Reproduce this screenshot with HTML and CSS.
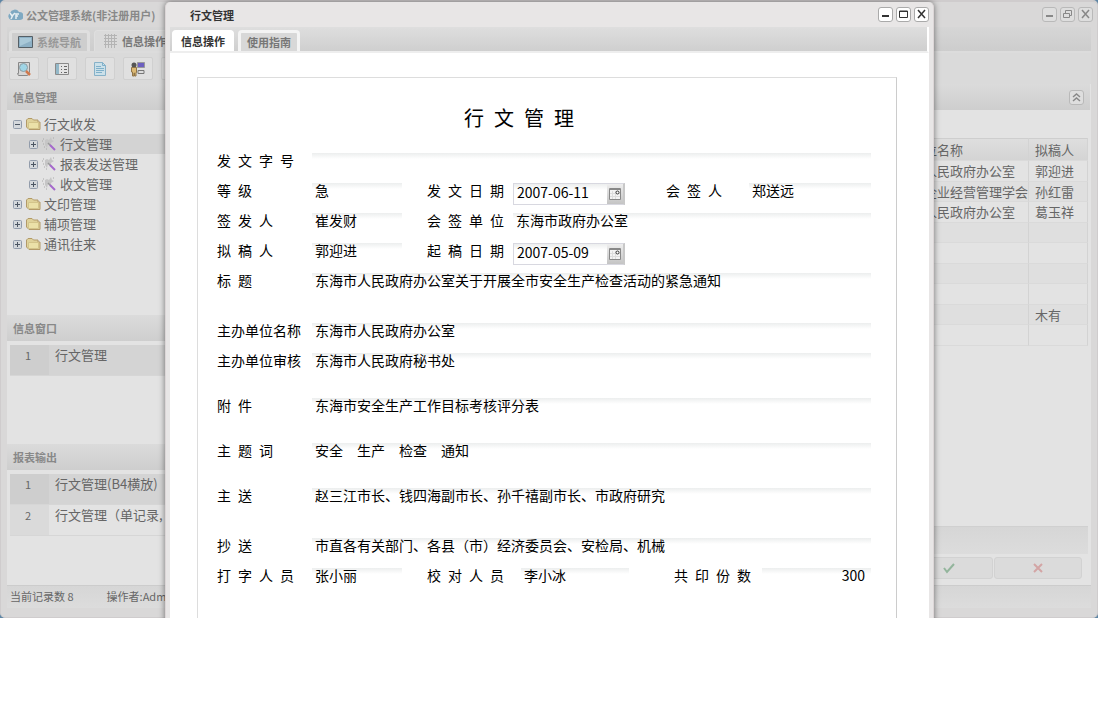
FILE: index.html
```html
<!DOCTYPE html>
<html lang="zh-CN">
<head>
	<meta charset="UTF-8">
	<meta name="viewport" content="width=device-width, initial-scale=1.0">
	<title>公文管理系统</title>
	<link rel="stylesheet" href="styles.css">
</head>
<body>
	<svg class="symbols" aria-hidden="true">
		<symbol id="folder" viewBox="0 0 16 14">
			<path d="M1.500 10V3L3 1.500h4l1.500 1.500H13v2h2v7.500H4z" fill="#dfd29a" stroke="#b39a68"/>
			<path d="M3.500 5.500h10v6h-10z" fill="#ebe1a8" stroke="#d3c48a"/>
		</symbol>
		<symbol id="plus" viewBox="0 0 9 9">
			<rect x=".5" y=".5" width="8" height="8" rx="1" fill="#d4d8dc" stroke="#929cab"/>
			<path d="M2 4.500h5M4.500 2v5" stroke="#4c5663"/>
		</symbol>
		<symbol id="minus" viewBox="0 0 9 9">
			<rect x=".5" y=".5" width="8" height="8" rx="1" fill="#d4d8dc" stroke="#929cab"/>
			<path d="M2 4.500h5" stroke="#4c5663"/>
		</symbol>
		<symbol id="wand" viewBox="0 0 16 16">
			<path d="M4 4l2-1 2 1 2-3 1 3 2 1-3 2v3L7 8l-1 4-2-3z" fill="#c6c6c6"/>
			<path d="M1 5h1M2 8h1M3 11h1M5 13h1M2 3h1M12 2h1" stroke="#a8a8a8"/>
			<path d="M7 7l3 3" stroke="#999" stroke-width="1.500"/>
			<path d="M9 9l5 5" stroke="#a568cc" stroke-width="2"/>
		</symbol>
		<symbol id="min" viewBox="0 0 15 15"><path d="M4 9h7" stroke="currentColor" stroke-width="2"/></symbol>
		<symbol id="max" viewBox="0 0 15 15"><path d="M3.500 4v6.500h8V4zM3 4.500h9" fill="none" stroke="currentColor"/></symbol>
		<symbol id="restore" viewBox="0 0 15 15"><path d="M5.500 6V3.500h6v5H9M3.500 6.500h6v4h-6z" fill="none" stroke="currentColor"/></symbol>
		<symbol id="close" viewBox="0 0 15 15"><path d="M4 3l7 8M11 3l-7 8" stroke="currentColor" stroke-width="1.500"/></symbol>
		<symbol id="calendar" viewBox="0 0 14 14">
			<path d="M1.500 1.500h11v11h-11z" fill="#f4f4f4" stroke="#888"/>
			<path d="M1 2.500h12" stroke="#888"/>
			<path d="M4.500 4v8M7.500 4v8M2 6.500h10M2 9.500h10" stroke="#ddd"/>
			<circle cx="9.500" cy="5.500" r="1.500" fill="#fff" stroke="#333"/>
		</symbol>
	</svg>

	<div class="desktop">
		<div class="app">
			<header class="titlebar">
				<svg class="logo" viewBox="0 0 16 13">
					<path d="M4 12a4 4 0 0 1-1-7 5 5 0 0 1 9-1 4 4 0 0 1 1 8z" fill="#7fa9c2"/>
					<path d="M3 5l2 3 3-3M6 7l-2 4M12 6H9v2h2M9 8v3" fill="none" stroke="#e6eef2" stroke-width="1.500"/>
				</svg>
				<span class="caption">公文管理系统(非注册用户)</span>
				<div class="window-buttons">
					<button aria-label="最小化"><svg><use href="#min"/></svg></button>
					<button aria-label="还原"><svg><use href="#restore"/></svg></button>
					<button aria-label="关闭"><svg><use href="#close"/></svg></button>
				</div>
			</header>

			<nav class="tabs">
				<button class="tab inactive">
					<svg viewBox="0 0 16 14"><path d="M.5 1.500h14v11H.5z" fill="#8db0c5" stroke="#555f66"/><path d="M2 3h11v3L2 11z" fill="#a9c8d8"/></svg>系统导航
				</button>
				<button class="tab">
					<svg viewBox="0 0 16 14"><path d="M2.500 0v14M5.500 0v14M8.500 0v14M11.500 0v14M1 1.500h13M1 4.500h13M1 7.500h13M1 10.500h13" stroke="#b4b4b4"/></svg>信息操作
				</button>
			</nav>

			<div class="toolbar">
				<button aria-label="查询"><svg viewBox="0 0 16 16"><path d="M2.500 1.500h11v10l-2 3h-9l-1-2h1z" fill="#d6d6d6" stroke="#888"/><circle cx="7.500" cy="6.500" r="4" fill="#9fd5e6" stroke="#8b9ca3"/><path d="M10 10l4 4" stroke="#d0784c" stroke-width="2.500"/></svg></button>
				<button aria-label="列表"><svg viewBox="0 0 16 16"><path d="M1.500 2.500h13v11h-13z" fill="#e4e4e4" stroke="#8a8a8a"/><path d="M2 3h3v10H2z" fill="#93b8c8"/><path d="M7 5.500h1M7 8.500h1M7 11.500h1M10 5.500h3M10 8.500h3M10 11.500h3" stroke="#666"/></svg></button>
				<button aria-label="文档"><svg viewBox="0 0 16 16"><path d="M2.500 1.500h8l3 3v10h-11z" fill="#cbe0e9" stroke="#86b1c8"/><path d="M10.500 1.500v3h3M4 5.500h5M4 7.500h8M4 9.500h8M4 11.500h6" fill="none" stroke="#7fb0ca"/></svg></button>
				<button aria-label="用户"><svg viewBox="0 0 16 16"><path d="M7.500 1.500h7v5h-7z" fill="#6c5fc0" stroke="#999"/><path d="M8 9.500h6v3H8z" fill="#ddd" stroke="#777"/><circle cx="4" cy="4" r="2.500" fill="#555"/><path d="M1.500 6.500h5v5H6V15H4.500v-3H4v3H2.500v-4h-1z" fill="#dcb974" stroke="#8e7448"/></svg></button>
				<button aria-label="更多"></button>
			</div>

			<div class="workspace">
				<aside class="sidebar">
					<h2 class="panel-title">信息管理</h2>
					<ul class="tree">
						<li><svg class="toggle"><use href="#minus"/></svg><svg class="icon"><use href="#folder"/></svg>行文收发</li>
						<li class="child selected"><svg class="toggle"><use href="#plus"/></svg><svg class="icon"><use href="#wand"/></svg>行文管理</li>
						<li class="child"><svg class="toggle"><use href="#plus"/></svg><svg class="icon"><use href="#wand"/></svg>报表发送管理</li>
						<li class="child"><svg class="toggle"><use href="#plus"/></svg><svg class="icon"><use href="#wand"/></svg>收文管理</li>
						<li><svg class="toggle"><use href="#plus"/></svg><svg class="icon"><use href="#folder"/></svg>文印管理</li>
						<li><svg class="toggle"><use href="#plus"/></svg><svg class="icon"><use href="#folder"/></svg>辅项管理</li>
						<li><svg class="toggle"><use href="#plus"/></svg><svg class="icon"><use href="#folder"/></svg>通讯往来</li>
					</ul>
					<h2 class="panel-title">信息窗口</h2>
					<div class="list windows">
						<div class="item selected"><span class="num">1</span><span class="name">行文管理</span></div>
					</div>
					<h2 class="panel-title">报表输出</h2>
					<div class="list">
						<div class="item selected"><span class="num">1</span><span class="name">行文管理(B4横放)</span></div>
						<div class="item"><span class="num">2</span><span class="name">行文管理（单记录,</span></div>
					</div>
				</aside>

				<main class="main">
					<div class="panel-title main-title">
						<button class="collapse" aria-label="折叠"><svg viewBox="0 0 15 15"><path d="M4 7l3.500-3L11 7M4 11l3.500-3 3.500 3" fill="none" stroke="currentColor" stroke-width="1.500"/></svg></button>
					</div>
					<div class="records">
						<table>
							<thead>
								<tr><th></th><th class="unit">主办单位名称</th><th class="author">拟稿人</th></tr>
							</thead>
							<tbody>
								<tr><td></td><td>东海市人民政府办公室</td><td>郭迎进</td></tr>
								<tr><td></td><td>东海市企业经营管理学会</td><td>孙红雷</td></tr>
								<tr><td></td><td>东海市人民政府办公室</td><td>葛玉祥</td></tr>
								<tr><td></td><td></td><td></td></tr>
								<tr><td></td><td></td><td></td></tr>
								<tr><td></td><td></td><td></td></tr>
								<tr><td></td><td></td><td></td></tr>
								<tr><td></td><td></td><td>木有</td></tr>
								<tr><td></td><td></td><td></td></tr>
							</tbody>
						</table>
					</div>
					<div class="summary"></div>
					<div class="actions">
						<button aria-label="确定"><svg viewBox="0 0 12 12"><path d="M1 6l3 4 7-8" fill="none" stroke="#93b59c" stroke-width="2"/></svg></button>
						<button aria-label="取消"><svg viewBox="0 0 12 12"><path d="M2 2l8 8M10 2l-8 8" stroke="#d3a5a5" stroke-width="2"/></svg></button>
					</div>
				</main>
			</div>

			<footer class="statusbar">
				<span>当前记录数 8</span>
				<span>操作者:Adm</span>
			</footer>
		</div>

		<section class="dialog">
			<header class="titlebar">
				<span class="caption">行文管理</span>
				<div class="window-buttons">
					<button aria-label="最小化"><svg><use href="#min"/></svg></button>
					<button aria-label="最大化"><svg><use href="#max"/></svg></button>
					<button aria-label="关闭"><svg><use href="#close"/></svg></button>
				</div>
			</header>
			<nav class="tabs">
				<button class="tab">信息操作</button>
				<button class="tab inactive">使用指南</button>
			</nav>
			<div class="dialog-body">
				<form class="paper">
					<h1>行&ensp;文&ensp;管&ensp;理</h1>

					<div class="row">
						<label for="docNo">发&ensp;文&ensp;字&ensp;号</label>
						<input class="wide" type="text" id="docNo">
					</div>
					<div class="row">
						<label for="level">等&ensp;级</label>
						<input class="short" type="text" id="level" value="急">
						<label for="sendDate">发&ensp;文&ensp;日&ensp;期</label>
						<div class="date">
							<input type="text" id="sendDate" value="2007-06-11">
							<button type="button" aria-label="选择日期"><svg><use href="#calendar"/></svg></button>
						</div>
						<label for="cosigner">会&ensp;签&ensp;人</label>
						<input type="text" id="cosigner" value="郑送远">
					</div>
					<div class="row">
						<label for="signer">签&ensp;发&ensp;人</label>
						<input class="short" type="text" id="signer" value="崔发财">
						<label for="cosignUnit">会&ensp;签&ensp;单&ensp;位</label>
						<input class="rest" type="text" id="cosignUnit" value="东海市政府办公室">
					</div>
					<div class="row">
						<label for="drafter">拟&ensp;稿&ensp;人</label>
						<input class="short" type="text" id="drafter" value="郭迎进">
						<label for="draftDate">起&ensp;稿&ensp;日&ensp;期</label>
						<div class="date">
							<input type="text" id="draftDate" value="2007-05-09">
							<button type="button" aria-label="选择日期"><svg><use href="#calendar"/></svg></button>
						</div>
					</div>
					<div class="row tall">
						<label for="subject">标&ensp;题</label>
						<input class="wide" type="text" id="subject" value="东海市人民政府办公室关于开展全市安全生产检查活动的紧急通知">
					</div>
					<div class="row">
						<label for="hostUnit">主办单位名称</label>
						<input class="wide" type="text" id="hostUnit" value="东海市人民政府办公室">
					</div>
					<div class="row medium">
						<label for="hostCheck">主办单位审核</label>
						<input class="wide" type="text" id="hostCheck" value="东海市人民政府秘书处">
					</div>
					<div class="row medium">
						<label for="attachment">附&ensp;件</label>
						<input class="wide" type="text" id="attachment" value="东海市安全生产工作目标考核评分表">
					</div>
					<div class="row medium">
						<label for="keywords">主&ensp;题&ensp;词</label>
						<input class="wide" type="text" id="keywords" value="安全　生产　检查　通知">
					</div>
					<div class="row tall">
						<label for="sendTo">主&ensp;送</label>
						<input class="wide" type="text" id="sendTo" value="赵三江市长、钱四海副市长、孙千禧副市长、市政府研究">
					</div>
					<div class="row">
						<label for="copyTo">抄&ensp;送</label>
						<input class="wide" type="text" id="copyTo" value="市直各有关部门、各县（市）经济委员会、安检局、机械">
					</div>
					<div class="row last">
						<label for="typist">打&ensp;字&ensp;人&ensp;员</label>
						<input class="short" type="text" id="typist" value="张小丽">
						<label for="proofreader">校&ensp;对&ensp;人&ensp;员</label>
						<input class="proof" type="text" id="proofreader" value="李小冰">
						<label for="copies">共&ensp;印&ensp;份&ensp;数</label>
						<input class="copies" type="text" id="copies" value="300">
					</div>
				</form>
			</div>
		</section>
	</div>
</body>
</html>
```

FILE: styles.css
```css
* {
	box-sizing: border-box;
}
body {
	margin: 0;
	background: #fff;
	font-family: "Noto Sans CJK SC", sans-serif;
	font-size: 13px;
	line-height: 20px;
	color: #666;
}
button,
input {
	font-family: inherit;
	margin: 0;
	padding: 0;
}
button {
	cursor: pointer;
}
h1,
h2,
ul {
	margin: 0;
	padding: 0;
}
svg {
	flex-shrink: 0;
}
.symbols {
	display: none;
}

.desktop {
	position: relative;
	overflow: hidden;
	background: #5f86a5;
}
.app {
	display: flex;
	flex-direction: column;
	padding: 0 6px 9px;
	background: #d9d8d8;
	border: solid #cfcccd;
	border-width: 2px 1px 1px;
	border-radius: 5px;
}

/* window caption */
.titlebar {
	display: flex;
	align-items: center;
	height: 25px;
}
.caption {
	flex: 1;
	font-size: 11px;
	font-weight: bold;
	color: #888;
}
.logo {
	width: 16px;
	height: 13px;
	margin-right: 3px;
}
.window-buttons {
	display: flex;
	gap: 3px;
	margin-right: -2px;
}
.window-buttons button,
.collapse {
	display: flex;
	width: 15px;
	height: 15px;
	background: #dedede;
	border: 1px solid #b9b9b9;
	border-radius: 3px;
	color: #888;
}
.window-buttons svg,
.collapse svg {
	width: 15px;
	height: 15px;
	margin: -1px;
}

/* tabs */
.tabs {
	display: flex;
	gap: 4px;
	height: 26px;
	padding: 3px 2px 0;
	background: linear-gradient(#d6d6d6, #cdcdcd);
	border-bottom: 2px solid #dcdcdc;
}
.tab {
	display: flex;
	align-items: center;
	gap: 3px;
	padding: 0 8px;
	border: 1px solid #dfdfdf;
	border-bottom: 0;
	border-radius: 4px 4px 0 0;
	background: #dadada;
	font-size: 11px;
	font-weight: bold;
	color: #777;
	white-space: nowrap;
}
.tab.inactive {
	background: #cecece;
	border-width: 3px 3px 0;
	padding: 0 6px;
	color: #999;
}
.tab svg {
	width: 16px;
	height: 14px;
}

.toolbar {
	display: flex;
	gap: 8px;
	height: 31px;
	padding: 4px 2px;
	background: #dadada;
}
.toolbar button {
	display: flex;
	align-items: center;
	justify-content: center;
	width: 30px;
	height: 23px;
	background: #e0e0e0;
	border: 1px solid #d0d0d0;
	border-radius: 2px;
}
.toolbar svg {
	width: 16px;
	height: 16px;
}

.workspace {
	display: flex;
	min-height: 501px;
	background: #e3e3e3;
}
.sidebar {
	display: flex;
	flex-direction: column;
	width: 200px;
}
.main {
	display: flex;
	flex-direction: column;
	flex: 1;
}
.panel-title {
	height: 26px;
	padding: 0 6px;
	background: linear-gradient(#dbdbdb, #cecece);
	font-size: 11px;
	font-weight: bold;
	line-height: 27px;
	color: #888;
}

/* sidebar tree */
.tree {
	min-height: 205px;
	padding: 4px 0 0 3px;
	list-style: none;
}
.tree li {
	display: flex;
	align-items: center;
	height: 20px;
	padding-left: 3px;
}
.tree .child {
	padding-left: 19px;
}
.tree .selected {
	background: #d3d3d3;
}
.toggle {
	width: 9px;
	height: 9px;
	margin-right: 3px;
}
.icon {
	width: 16px;
	height: 16px;
	margin-right: 3px;
}

.list {
	padding: 4px 0 0 3px;
}
.windows {
	min-height: 103px;
}
.item {
	display: flex;
	height: 31px;
	border-bottom: 1px solid #d6d6d6;
}
.item .num {
	width: 39px;
	padding-right: 3px;
	background: #dadada;
	font-size: 11px;
	text-align: center;
}
.item .name {
	padding-left: 6px;
	white-space: nowrap;
}
.item.selected {
	background: #d4d4d4;
}
.item.selected .num {
	background: #cecece;
}

/* records */
.main-title {
	display: flex;
	align-items: center;
	justify-content: flex-end;
	margin-right: 1px;
}
.records {
	flex: 1;
	padding: 28px 3px 0 0;
}
.records table {
	width: 100%;
	border-spacing: 0;
	table-layout: fixed;
}
.records th,
.records td {
	padding: 0 0 0 6px;
	border-right: 1px solid #d3d3d3;
	border-bottom: 1px solid #dadada;
	font-weight: normal;
	text-align: left;
	line-height: 18px;
	white-space: nowrap;
}
.records th {
	height: 23px;
	background: linear-gradient(#dedede, #d4d4d4);
	border-top: 1px solid #cecece;
}
.records td {
	height: 21px;
}
.records tr:nth-child(even) td {
	height: 20px;
	background: #dfdfdf;
}
.records .unit {
	width: 150px;
}
.records .author {
	width: 59px;
}
.summary {
	height: 28px;
	margin-right: 3px;
	background: linear-gradient(#d6d6d6, #dcdcdc);
	border-top: 1px solid #d0d0d0;
}
.actions {
	display: flex;
	justify-content: flex-end;
	gap: 1px;
	padding: 3px 9px 6px 0;
}
.actions button {
	display: flex;
	align-items: center;
	justify-content: center;
	width: 88px;
	height: 22px;
	background: #dbdbdb;
	border: 1px solid #d2d2d2;
	border-radius: 3px;
}
.actions svg {
	width: 12px;
	height: 12px;
}
.statusbar {
	display: flex;
	gap: 33px;
	height: 23px;
	padding-left: 3px;
	background: linear-gradient(#d6d6d6, #dcdcdc);
	border-top: 1px solid #ccc;
	font-size: 11px;
	line-height: 20px;
}

/* dialog */
.dialog {
	position: absolute;
	top: 2px;
	bottom: -8px;
	left: 165px;
	right: 164px;
	display: flex;
	flex-direction: column;
	background: #e8e6e6;
	border: 1px solid #dcd6d7;
	border-top: 0;
	border-radius: 5px;
	padding: 0 4px;
	box-shadow: 0 0 6px rgba(0, 0, 0, 0.5);
}
.dialog .caption {
	padding-left: 20px;
	color: #333;
}
.dialog .window-buttons {
	margin-right: 0;
}
.dialog .window-buttons button {
	background: #fff;
	border-color: #aaa;
	color: #333;
}
.dialog .tabs {
	background: linear-gradient(#dedede, #cfcfcf);
	border-bottom-color: #eee;
	border-right: 2px solid #fff;
}
.dialog .tab {
	background: #fff;
	border-color: #fff;
	color: #333;
}
.dialog .tab.inactive {
	background: #d8d8d8;
	border-color: #f4f4f4;
	color: #777;
}
.dialog-body {
	flex: 1;
	padding: 24px 32px 0 27px;
	background: #fff;
}
.paper {
	height: 100%;
	padding: 25px 25px 0 19px;
	border: 1px solid #ddd;
	border-right-color: #ccc;
	border-bottom: 0;
	color: #000;
	font-size: 14px;
}
.paper h1 {
	height: 50px;
	padding-right: 50px;
	font-size: 20px;
	font-weight: normal;
	line-height: 30px;
	text-align: center;
}

/* form rows */
.row {
	display: grid;
	grid-template-columns: 95px 115px 86px 153px 83px 1fr;
	align-items: start;
	min-height: 30px;
}
.row.medium {
	min-height: 45px;
}
.row.tall {
	min-height: 50px;
}
.row.last {
	grid-template-columns: 95px 115px 94px 153px 88px 1fr;
}
.row label {
	line-height: 14px;
	white-space: nowrap;
}
.row input {
	width: 100%;
	min-width: 0;
	height: 20px;
	padding: 0 0 6px 3px;
	border: 0;
	outline: 0;
	background: linear-gradient(#eceeee, #fff 6px);
	color: #000;
	font-size: 14px;
	line-height: 14px;
}
.row .short {
	width: 90px;
}
.row .wide {
	grid-column: 2 / -1;
}
.row .rest {
	grid-column: 4 / -1;
}
.row .proof {
	width: 108px;
}
.row .copies {
	padding-right: 6px;
	text-align: right;
}
.date {
	display: flex;
	width: 112px;
	height: 22px;
	border: 1px solid #d8d8e0;
	border-right: 2px solid #c8c8c8;
}
.row .date input {
	flex: 1;
	padding-bottom: 4px;
}
.date button {
	display: flex;
	align-items: center;
	justify-content: center;
	width: 16px;
	border: 0;
	background: linear-gradient(#eee, #c4c4c4);
}
.date svg {
	width: 14px;
	height: 14px;
}
```
